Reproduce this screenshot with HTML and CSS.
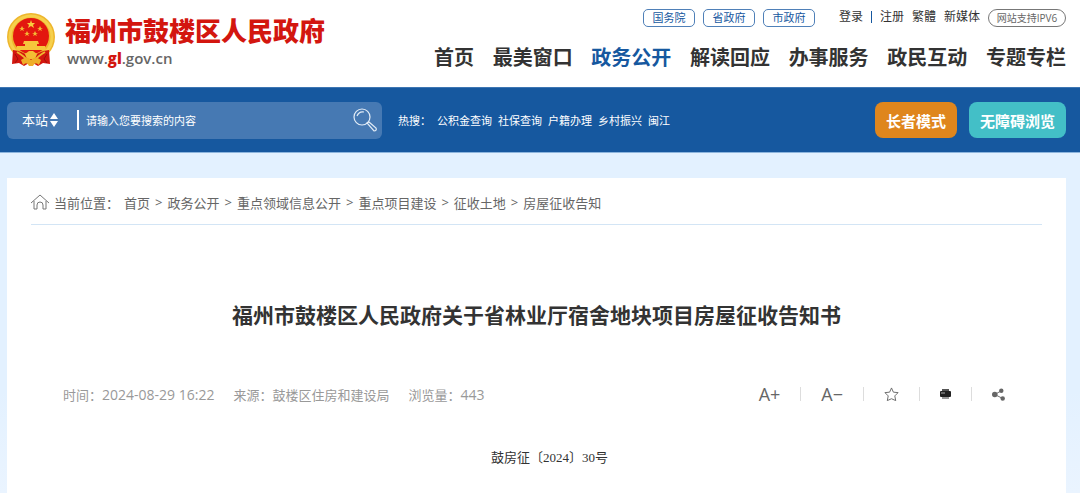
FILE: index.html
```html
<!DOCTYPE html>
<html lang="zh-CN">
<head>
  <meta charset="UTF-8">
  <title>福州市鼓楼区人民政府</title>
  <link rel="stylesheet" href="styles.css">
</head>
<body>
  <header class="header">
    <a class="logo" href="#">
      <svg class="emblem" viewBox="0 0 48 53" aria-hidden="true">
        <circle cx="24" cy="24" r="24" fill="#eeb62c"/>
        <circle cx="24" cy="24" r="21" fill="none" stroke="#f6d04c" stroke-width="3"/>
        <circle cx="24" cy="23" r="18" fill="#e3170f"/>
        <path d="M24 7 L25 10 L28 10 L26 12 L27 15 L24 13 L21 15 L22 12 L20 10 L23 10 Z" fill="#f8cf3f"/>
        <path d="M15 13 l1 2 h2 l-2 1 l1 2 l-2 -1 l-2 1 l1 -2 l-2 -1 h2z M33 13 l1 2 h2 l-2 1 l1 2 l-2 -1 l-2 1 l1 -2 l-2 -1 h2z M20 18 l1 2 h2 l-2 1 l1 2 l-2 -1 l-2 1 l1 -2 l-2 -1 h2z M28 18 l1 2 h2 l-2 1 l1 2 l-2 -1 l-2 1 l1 -2 l-2 -1 h2z" fill="#f4b935"/>
        <path d="M17 28 h14 l1 3 h-16z M18 31 h12 v2 h8 l1 4 h-30 l1 -4 h8z" fill="#f6c63c"/>
        <path d="M6 37 Q15 38 21 43 L24 41 L27 43 Q33 38 42 37 L43 51 L36 50 L31 53 L24 49 L17 53 L12 50 L5 51 Z" fill="#d3160f"/>
        <path d="M10 39 Q17 43 20 47 M38 39 Q31 43 28 47" fill="none" stroke="#f0b52f" stroke-width="2"/>
        <path d="M18 41 L22 38 H26 L30 41 L28 46 H20 Z" fill="#f4bd34"/>
        <path d="M14 47 Q20 42 24 47 Q28 42 34 47 L32 52 Q28 48 26 53 H22 Q20 48 16 52 Z" fill="#efae28"/>
        <path d="M8 41 L11 46 L8 50 M40 41 L37 46 L40 50" fill="none" stroke="#9f0f0c"/>
      </svg>
      <span class="logo-text">
        <span class="logo-name">福州市鼓楼区人民政府</span>
        <span class="logo-url">www.<b>gl</b>.gov.cn</span>
      </span>
    </a>

    <div class="header-right">
      <div class="top-links">
        <div class="gov-links">
          <a href="#">国务院</a>
          <a href="#">省政府</a>
          <a href="#">市政府</a>
        </div>
        <div class="user-links">
          <a href="#">登录</a>
          <span class="bar"></span>
          <a href="#">注册</a>
          <a href="#">繁體</a>
          <a href="#">新媒体</a>
          <a class="ipv6" href="#">网站支持IPV6</a>
        </div>
      </div>
      <nav class="nav">
        <a href="#">首页</a>
        <a href="#">最美窗口</a>
        <a class="active" href="#">政务公开</a>
        <a href="#">解读回应</a>
        <a href="#">办事服务</a>
        <a href="#">政民互动</a>
        <a href="#">专题专栏</a>
      </nav>
    </div>
  </header>

  <div class="search-bar">
    <form class="search-form">
      <select class="search-scope" aria-label="搜索范围">
        <option>本站</option>
      </select>
      <svg class="arrows" viewBox="0 0 8 14" aria-hidden="true"><path d="M4 0 L8 6 H0 Z M0 8 H8 L4 14 Z" fill="#fff"/></svg>
      <input class="search-input" type="text" placeholder="请输入您要搜索的内容" aria-label="搜索内容">
      <button class="search-btn" type="button" aria-label="搜索">
        <svg viewBox="0 0 24 24" fill="none" stroke="#e3edf7" stroke-width="1.200" aria-hidden="true">
          <circle cx="9" cy="9" r="8"/>
          <path d="M4 8 Q6 3 11 4 M14 15 L16 14 L23 20 Q24 23 21 23 Z"/>
        </svg>
      </button>
    </form>
    <div class="hot">
      <span class="hot-label">热搜：</span>
      <a href="#">公积金查询</a>
      <a href="#">社保查询</a>
      <a href="#">户籍办理</a>
      <a href="#">乡村振兴</a>
      <a href="#">闽江</a>
    </div>
    <div class="modes">
      <button class="mode elder" type="button">长者模式</button>
      <button class="mode access" type="button">无障碍浏览</button>
    </div>
  </div>

  <main class="main">
    <article class="card">
      <div class="crumbs">
        <svg class="home" viewBox="0 0 18 16" fill="none" stroke="#777" aria-hidden="true">
          <path d="M0 9 L9 1 L18 9 M3 7 V15 H6 V11 Q6 8 9 8 Q12 8 12 11 V15 H15 V7"/>
        </svg>
        <span class="crumbs-label">当前位置：</span>
        <a href="#">首页</a><span>&gt;</span>
        <a href="#">政务公开</a><span>&gt;</span>
        <a href="#">重点领域信息公开</a><span>&gt;</span>
        <a href="#">重点项目建设</a><span>&gt;</span>
        <a href="#">征收土地</a><span>&gt;</span>
        <a href="#">房屋征收告知</a>
      </div>

      <h1 class="title">福州市鼓楼区人民政府关于省林业厅宿舍地块项目房屋征收告知书</h1>

      <div class="meta">
        <div class="info">
          <span>时间：<span class="num">2024-08-29 16:22</span></span>
          <span>来源：鼓楼区住房和建设局</span>
          <span>浏览量：<span class="num">443</span></span>
        </div>
        <div class="tools">
          <button type="button">A+</button>
          <button type="button">A−</button>
          <button type="button" aria-label="收藏">
            <svg class="star" viewBox="0 0 16 16" fill="none" stroke="#666" stroke-linejoin="round" aria-hidden="true"><path d="M8 1 L10 5.500 L15 6 L11.500 9.500 L12.500 14.500 L8 12.500 L3.500 14.500 L4.500 9.500 L1 6 L6 5.500 Z"/></svg>
          </button>
          <button type="button" aria-label="打印">
            <svg class="print" viewBox="0 0 11 12" aria-hidden="true">
              <path d="M2 1 H9 V3 H2 Z" fill="#555"/>
              <rect x="0" y="3" width="11" height="6" rx="1" fill="#222"/>
              <path d="M1 5 H5" stroke="#aaa"/>
              <path d="M2 9 H9 V11 H2 Z" fill="#999"/>
            </svg>
          </button>
          <button type="button" aria-label="分享">
            <svg class="share" viewBox="0 0 14 14" fill="#666" aria-hidden="true">
              <path d="M10 3 L3 7 L11 11" fill="none" stroke="#666"/>
              <circle cx="10" cy="3" r="2.400"/><circle cx="3" cy="7" r="3"/><circle cx="11.500" cy="11.300" r="2.400"/>
            </svg>
          </button>
        </div>
      </div>

      <p class="doc-no">鼓房征〔2024〕30号</p>
    </article>
  </main>
</body>
</html>
```
FILE: styles.css
```css
* {
  box-sizing: border-box;
}

body {
  display: flex;
  flex-direction: column;
  min-height: 100vh;
  margin: 0;
  font-family: "Open Sans", "Noto Sans CJK SC", sans-serif;
  font-size: 13px;
  color: #333;
  background-color: #fff;
}

a {
  color: inherit;
  text-decoration: none;
}

button,
input,
select {
  font-family: inherit;
  border: none;
  padding: 0;
  background: none;
}

svg {
  display: block;
}

/* header */
.header {
  display: flex;
  justify-content: space-between;
  height: 87px;
  padding: 9px 14px 0 7px;
}

.logo {
  display: flex;
  gap: 10px;
  padding-top: 4px;
}

.emblem {
  width: 48px;
  height: 53px;
}

.logo-text {
  display: flex;
  flex-direction: column;
}

.logo-name {
  font-size: 26px;
  font-weight: 900;
  line-height: 36px;
  color: #d3160f;
}

.logo-url {
  padding-left: 2px;
  font-size: 15px;
  font-weight: 600;
  line-height: 18px;
  color: #666;
}

.logo-url b {
  color: #d3160f;
}

.header-right {
  width: 632px;
}

.top-links {
  display: flex;
  justify-content: flex-end;
  gap: 24px;
  font-size: 12px;
  line-height: 16px;
}

.gov-links {
  display: flex;
  gap: 8px;
}

.gov-links a {
  width: 52px;
  height: 18px;
  border: 1px solid #4f80b8;
  border-radius: 5px;
  font-size: 11px;
  text-align: center;
  color: #16589f;
}

.user-links {
  display: flex;
  gap: 8px;
}

.user-links .bar {
  width: 1px;
  height: 12px;
  margin-top: 2px;
  background-color: #16589f;
}

.user-links .ipv6 {
  width: 78px;
  height: 18px;
  border: 1px solid #777;
  border-radius: 9px;
  font-size: 10px;
  text-align: center;
  color: #666;
}

.nav {
  display: flex;
  justify-content: space-between;
  padding-top: 16px;
  font-size: 20px;
  font-weight: bold;
  line-height: 30px;
}

.nav .active {
  color: #16589f;
}

/* search */
.search-bar {
  display: flex;
  align-items: center;
  height: 66px;
  padding: 0 14px 0 7px;
  border-top: 1px solid #3d76b3;
  border-bottom: 1px solid #8db5dd;
  background-color: #16589f;
  color: #fff;
}

.search-form {
  display: flex;
  align-items: center;
  width: 375px;
  height: 37px;
  padding: 0 5px 0 15px;
  border-radius: 6px;
  background-color: #4679b3;
}

.search-scope {
  width: 28px;
  appearance: none;
  font-size: 13px;
  color: #fff;
}

.arrows {
  width: 8px;
  height: 14px;
}

.search-input {
  flex: 1;
  min-width: 0;
  height: 20px;
  margin-left: 19px;
  padding-left: 7px;
  border-left: 2px solid #fff;
  font-size: 11px;
  color: #fff;
}

.search-input::placeholder {
  color: #fff;
}

.search-btn svg {
  width: 24px;
  height: 24px;
}

.hot {
  display: flex;
  gap: 6px;
  margin-left: 16px;
  font-size: 11px;
}

.modes {
  display: flex;
  gap: 12px;
  margin-left: auto;
}

.mode {
  height: 36px;
  padding: 0 11px;
  border-radius: 8px;
  font-size: 15px;
  font-weight: bold;
  color: #fff;
}

.elder {
  background-color: #df861d;
}

.access {
  background-color: #43bfc7;
}

/* article */
.main {
  display: flex;
  flex: 1;
  padding: 25px 14px 0 7px;
  background: linear-gradient(#e3f1ff 70%, #eaf4ff);
}

.card {
  flex: 1;
  padding: 0 24px;
  background-color: #fff;
}

.crumbs {
  display: flex;
  align-items: center;
  gap: 5px;
  height: 47px;
  padding-top: 2px;
  border-bottom: 1px solid #d3e5f5;
  color: #666;
}

.home {
  width: 18px;
  height: 16px;
}

.title {
  margin: 74px 0 0;
  font-size: 21px;
  line-height: 32px;
  text-align: center;
}

.meta {
  display: flex;
  align-items: center;
  justify-content: space-between;
  height: 20px;
  margin-top: 53px;
  padding: 0 17px 0 32px;
}

.info {
  display: flex;
  align-items: baseline;
  gap: 19px;
  color: #999;
}

.num {
  font-size: 14px;
}

.tools {
  display: flex;
  align-items: center;
}

.tools button {
  height: 14px;
  padding: 0 20px;
  font-size: 18px;
  line-height: 14px;
  color: #666;
}

.tools button + button {
  border-left: 1px solid #ddd;
}

.star {
  width: 15px;
  height: 15px;
}

.print {
  width: 11px;
  height: 12px;
}

.share {
  width: 13px;
  height: 13px;
}

.doc-no {
  margin: 44px 0 0;
  font-family: "Liberation Serif", "Noto Sans CJK SC", serif;
  line-height: 20px;
  text-align: center;
  text-indent: 2em;
}
```
